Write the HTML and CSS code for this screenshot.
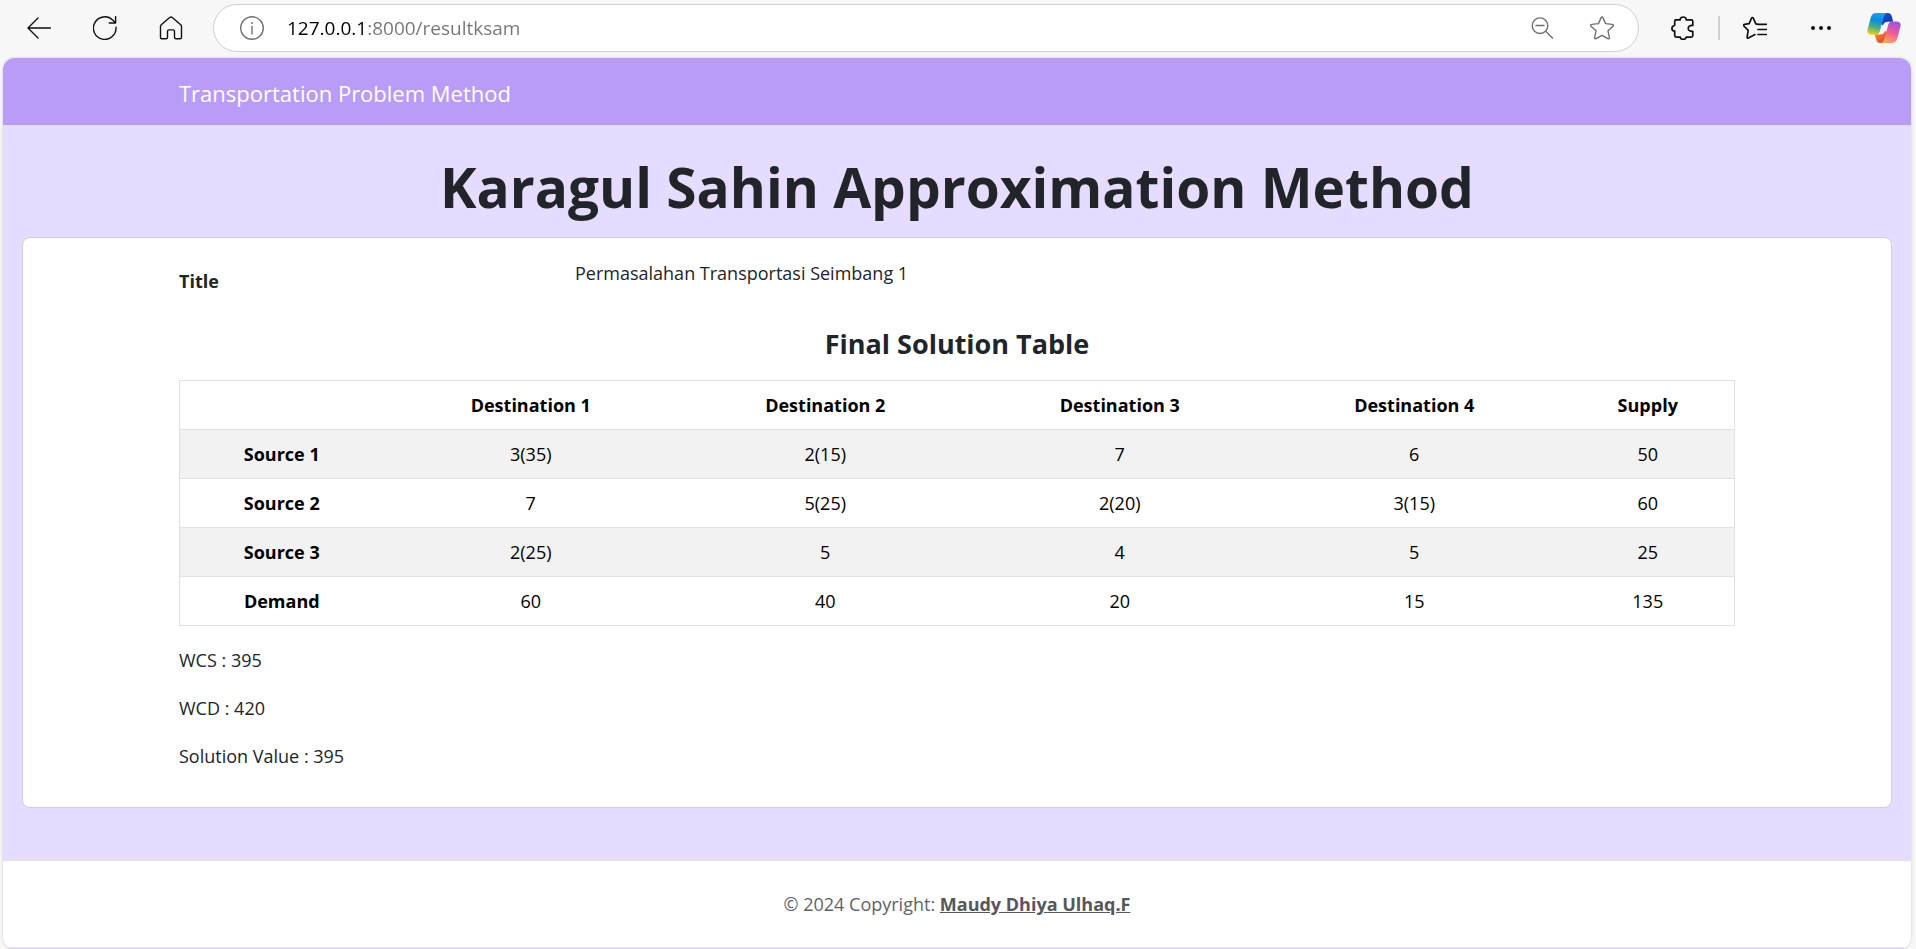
FILE: index.html
```html
<!DOCTYPE html>
<html lang="en">
<head>
<meta charset="utf-8">
<meta name="viewport" content="width=device-width, initial-scale=1">
<title>Transportation Problem Method</title>
<link rel="stylesheet" href="styles.css">
</head>
<body>
<header class="toolbar">
  <div class="toolbar-nav">
    <button class="tool" type="button" aria-label="Back">
      <svg class="icon" viewBox="0 0 24 24"><path d="M23.5 12H1M11 2L1 12l10 10"/></svg>
    </button>
    <button class="tool" type="button" aria-label="Refresh">
      <svg class="icon" viewBox="0 0 24 24"><path d="M23 11.2A11.3 11.3 0 1 1 19.6 4l3 2.8M22.6.6v6.4h-6.4"/></svg>
    </button>
    <button class="tool" type="button" aria-label="Home">
      <svg class="icon" viewBox="0 0 24 24"><path d="M10.7 1.5a2 2 0 0 1 2.6 0l8.4 7.3c.5.5.8 1 .8 1.700V21.300c0 .9-.6 1.500-1.500 1.500h-4c-.9 0-1.500-.6-1.500-1.500V15.500c0-1-.6-1.600-1.500-1.600h-4c-.9 0-1.500.6-1.500 1.600v5.800c0 .9-.6 1.500-1.500 1.500H3c-.9 0-1.500-.6-1.500-1.500V10.500c0-.7.3-1.200.8-1.700z"/></svg>
    </button>
  </div>
  <form class="address">
    <button class="tool tool-muted" type="button" aria-label="Site information">
      <svg class="icon" viewBox="0 0 24 24"><circle cx="12" cy="12" r="11.3"/><path d="M12 10.500v7.500"/><circle class="fill" cx="12" cy="7" r="1"/></svg>
    </button>
    <input class="address-input" type="text" aria-label="Address" value="127.0.0.1:8000/resultksam">
    <button class="tool tool-muted" type="button" aria-label="Zoom out">
      <svg class="icon" viewBox="0 0 24 24"><circle cx="10" cy="9.700" r="7.800"/><path d="M15.700 15.300l6.800 6.700M6 9.500h8"/></svg>
    </button>
    <button class="tool tool-muted" type="button" aria-label="Add to favorites">
      <svg class="icon" viewBox="0 0 24 24"><path d="M11.100 1.600a1 1 0 0 1 1.800 0l2.700 6 6.800.8a1 1 0 0 1 .6 1.800l-5 4.600 1.400 6.800a1 1 0 0 1-1.500 1.100L12 19.300l-5.900 3.400a1 1 0 0 1-1.500-1.100L6 14.800l-5-4.600a1 1 0 0 1 .6-1.800l6.800-.8z"/></svg>
    </button>
  </form>
  <div class="toolbar-tools">
    <button class="tool" type="button" aria-label="Extensions">
      <svg class="icon icon-bold" viewBox="0 0 24 24"><path d="M4.200 3.800H9.200C9.200 2 10.500 1 12.200 1s3 1 3 2.800H20.300c.9 0 1.500.6 1.500 1.500v4.200c-2.300-.3-4.600.700-4.600 2.900s2.300 3.200 4.600 2.900v4.300c0 .9-.6 1.500-1.500 1.500H15.200c-.2 1.400-1.300 2.300-3 2.300s-2.900-.9-3-2.300H5.200c-.9 0-1.500-.6-1.500-1.500v-4.400C1.900 15 .9 13.900.9 12.400s1-2.700 2.800-2.900V5.300c0-.9.600-1.500 1.500-1.500z"/></svg>
    </button>
    <span class="divider"></span>
    <button class="tool" type="button" aria-label="Favorites">
      <svg class="icon icon-bold" viewBox="0 0 24 24"><path d="M15.500 8.300l-2.700-.5-2.500-5.700a.9.900 0 0 0-1.700 0L6.100 7.700l-4.700.7a.9.900 0 0 0-.5 1.600l4.300 4.300-1.100 6.900a.9.900 0 0 0 1.300.9L12 18.600M15.500 8.300H23.500M15 13.500h8.500M15 18.500h8.500"/></svg>
    </button>
    <button class="tool tool-more" type="button" aria-label="More">
      <svg class="icon" viewBox="0 0 24 24"><g class="fill"><circle cx="4" cy="12" r="2"/><circle cx="12" cy="12" r="2"/><circle cx="20" cy="12" r="2"/></g></svg>
    </button>
    <button class="tool tool-copilot" type="button" aria-label="Copilot">
      <svg class="copilot" viewBox="0 0 102 92">
        <defs>
          <linearGradient id="cool" x1=".6" y1="0" x2=".35" y2="1"><stop offset="0" stop-color="#1aa2ef"/><stop offset=".35" stop-color="#0a8bdc"/><stop offset=".68" stop-color="#4bb07d"/><stop offset="1" stop-color="#f5cc16"/></linearGradient>
          <linearGradient id="deep" x1="0" y1="0" x2="1" y2="1"><stop offset="0" stop-color="#1a5be0"/><stop offset="1" stop-color="#0a2ca8"/></linearGradient>
          <linearGradient id="warm" x1=".7" y1="0" x2=".35" y2="1"><stop offset="0" stop-color="#a24df0"/><stop offset=".5" stop-color="#ee5a94"/><stop offset="1" stop-color="#ffa552"/></linearGradient>
          <linearGradient id="fold" x1="0" y1="0" x2="1" y2="1"><stop offset="0" stop-color="#f49a2a"/><stop offset="1" stop-color="#d8362f"/></linearGradient>
        </defs>
        <path fill="url(#deep)" d="M40 0H62C70 0 73 4 75 11L79 27H64C54 27 50 31 48 38L38 30z"/>
        <path fill="url(#fold)" d="M62 92H40C32 92 29 88 27 81L22 66H37C47 66 51 62 54 55L64 62z"/>
        <path fill="url(#cool)" d="M26 0H62C54 1 52 6 50 13L39 53C37 61 34 67 24 67H12C3 67-2 61 1 49L10 15C13 5 18 0 26 0z"/>
        <path fill="url(#warm)" d="M76 92H40C48 91 50 86 52 79L63 39C65 31 68 26 78 26H90C99 26 104 32 101 43L92 77C89 87 84 92 76 92z"/>
      </svg>
    </button>
  </div>
</header>

<div class="page">
  <nav class="navbar">
    <div class="container"><a class="brand" href="#">Transportation Problem Method</a></div>
  </nav>
  <main class="main">
    <h1 class="heading">Karagul Sahin Approximation Method</h1>
    <section class="card">
      <div class="container">
        <dl class="field">
          <dt class="field-label">Title</dt>
          <dd class="field-value">Permasalahan Transportasi Seimbang 1</dd>
        </dl>
        <h2 class="subheading">Final Solution Table</h2>
        <table class="solution">
          <colgroup><col class="col-source"><col span="4"><col class="col-supply"></colgroup>
          <thead>
            <tr><th></th><th scope="col">Destination 1</th><th scope="col">Destination 2</th><th scope="col">Destination 3</th><th scope="col">Destination 4</th><th scope="col">Supply</th></tr>
          </thead>
          <tbody>
            <tr><th scope="row">Source 1</th><td>3(35)</td><td>2(15)</td><td>7</td><td>6</td><td>50</td></tr>
            <tr><th scope="row">Source 2</th><td>7</td><td>5(25)</td><td>2(20)</td><td>3(15)</td><td>60</td></tr>
            <tr><th scope="row">Source 3</th><td>2(25)</td><td>5</td><td>4</td><td>5</td><td>25</td></tr>
            <tr><th scope="row">Demand</th><td>60</td><td>40</td><td>20</td><td>15</td><td>135</td></tr>
          </tbody>
        </table>
        <p class="result">WCS : 395</p>
        <p class="result">WCD : 420</p>
        <p class="result">Solution Value : 395</p>
      </div>
    </section>
  </main>
  <footer class="footer">© 2024 Copyright: <a class="author" href="#">Maudy Dhiya Ulhaq.F</a></footer>
</div>
</body>
</html>
```

FILE: styles.css
```css
* {
  box-sizing: border-box;
}

body {
  margin: 0;
  min-height: 100vh;
  display: flex;
  flex-direction: column;
  background: #f7f7f7;
  color: #212529;
  font-family: "Open Sans", "Noto Sans", sans-serif;
  font-size: 18px;
  line-height: 28px;
}

/* Browser toolbar */
.toolbar {
  display: flex;
  align-items: center;
  padding: 4px 15px 6px 27px;
}

.toolbar-nav {
  display: flex;
  gap: 42px;
  margin-right: 30px;
}

.tool {
  flex: none;
  width: 24px;
  height: 24px;
  padding: 0;
  border: 0;
  background: none;
  color: #111;
}

.tool-muted {
  color: #707070;
}

.icon {
  display: block;
  width: 24px;
  height: 24px;
  fill: none;
  stroke: currentColor;
  stroke-width: 1.4;
  stroke-linecap: round;
  stroke-linejoin: round;
}

.icon-bold {
  stroke-width: 1.7;
}

.icon .fill {
  fill: currentColor;
  stroke: none;
}

.address {
  flex: 1;
  display: flex;
  align-items: center;
  gap: 36px;
  height: 48px;
  padding: 0 24px 0 26px;
  border: 1px solid #cfcfcf;
  border-radius: 24px;
  background: #fff;
}

.address-input {
  flex: 1;
  min-width: 0;
  margin-left: -13px;
  padding: 0;
  border: 0;
  outline: 0;
  background: linear-gradient(to right, #000 79px, #757575 79px);
  -webkit-background-clip: text;
  background-clip: text;
  color: transparent;
  font: inherit;
  font-size: 19px;
}

.toolbar-tools {
  display: flex;
  align-items: center;
  margin-left: 32px;
  gap: 23px;
}

.divider {
  width: 2px;
  height: 24px;
  background: #d0d0d0;
}

.tool-more {
  margin-left: 19px;
}

.tool-copilot {
  width: 34px;
  height: 30px;
  margin-left: 11px;
}

.copilot {
  display: block;
  width: 34px;
  height: 30px;
}

/* Page */
.page {
  flex: 1;
  display: flex;
  flex-direction: column;
  margin: 0 5px 0 3px;
  padding-bottom: 2px;
  border-radius: 12px;
  overflow: hidden;
  background: #e6dcff;
  box-shadow: 0 0 3px #c8c8c8;
}

.container {
  max-width: 1556px;
  margin: 0 auto;
}

.navbar {
  padding: 20px 15px 17px;
  background: #b89cf7;
}

.brand {
  display: block;
  color: #fff;
  font-size: 22px;
  line-height: 30px;
  text-decoration: none;
}

.main {
  flex: 1;
  padding: 27px 19px 52px;
}

.heading {
  margin: 0 0 16px;
  font-size: 55px;
  line-height: 69px;
  font-weight: 700;
  text-align: center;
}

.card {
  padding: 21px 15px 37px;
  border: 1px solid #d0cfd6;
  border-radius: 8px;
  background: #fff;
}

.field {
  display: grid;
  grid-template-columns: 396px 1fr;
  margin: 0 0 31px;
}

.field-label {
  padding-top: 8px;
  font-weight: 700;
}

.field-value {
  margin: 0;
}

.subheading {
  margin: 0 0 18px;
  font-size: 27px;
  line-height: 36px;
  font-weight: 700;
  text-align: center;
}

.solution {
  width: 100%;
  margin-bottom: 20px;
  border: 1px solid #dee2e6;
  border-collapse: collapse;
  table-layout: fixed;
  color: #000;
  text-align: center;
}

.solution th,
.solution td {
  padding: 10px;
  border-bottom: 1px solid #dee2e6;
}

.solution tbody tr:nth-child(odd) {
  background: #f2f2f2;
}

.col-source {
  width: 204px;
}

.col-supply {
  width: 173px;
}

.result {
  margin: 0 0 20px;
}

.result:last-child {
  margin-bottom: 0;
}

.footer {
  padding: 29px 15px;
  background: #fff;
  color: #5f6367;
  text-align: center;
}

.author {
  color: #54585c;
  font-weight: 700;
}
```
